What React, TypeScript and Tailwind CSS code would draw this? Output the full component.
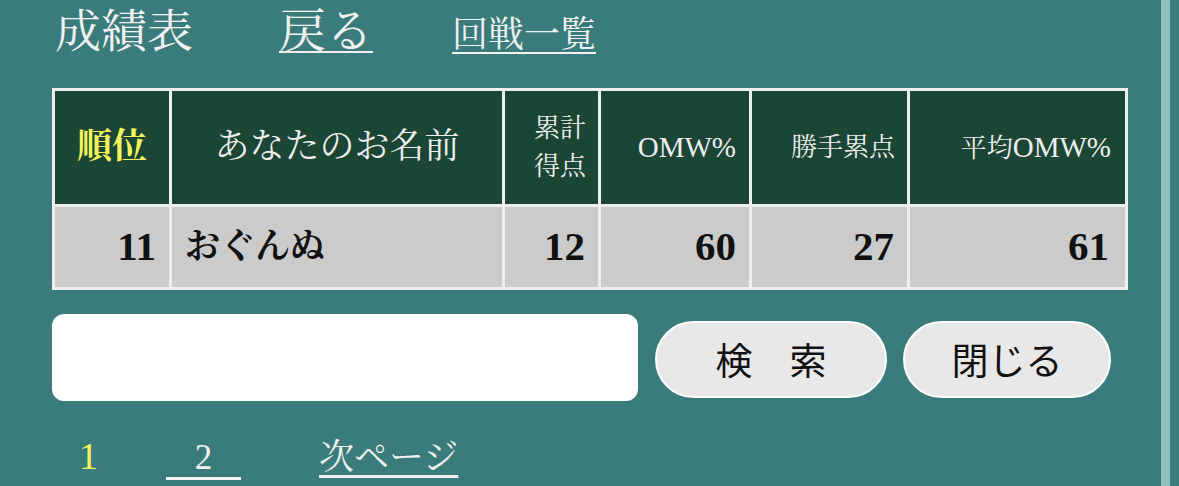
import React from "react";

const serif = "font-['Liberation_Serif','Noto_Serif_CJK_JP','Noto_Sans_CJK_JP',serif]";

export default function App() {
  return (
    <div className="flex h-[486px] w-[1179px] overflow-hidden bg-[#3a7c7b]">
      <div className={`w-[1161px] shrink-0 pl-[52px] ${serif}`}>
        {/* title row */}
        <div className="flex h-[88px] items-baseline pt-[5px] text-[#f1f1f1]">
          <span className="ml-[3px] text-[46px] leading-[52px]">成績表</span>
          <a className="ml-[86px] text-[47px] leading-[52px] underline decoration-[2px] underline-offset-[4px]">戻る</a>
          <a className="ml-[79px] text-[36px] leading-[52px] underline decoration-[2px] underline-offset-[5px]">回戦一覧</a>
        </div>

        {/* results table */}
        <table className="w-[1076px] table-fixed border-separate border-spacing-[3px] bg-[#efefef]">
          <colgroup>
            <col className="w-[114px]" />
            <col className="w-[330px]" />
            <col className="w-[93px]" />
            <col className="w-[148px]" />
            <col className="w-[155px]" />
            <col className="w-[215px]" />
          </colgroup>
          <thead>
            <tr className="h-[113px] bg-[#1b4535] text-[#eeeeee]">
              <th className="text-center align-middle text-[35px] font-bold text-[#f3f35c]">順位</th>
              <th className="text-center align-middle text-[35px] font-normal">あなたのお名前</th>
              <th className="pr-[12px] text-right align-middle text-[26px] font-normal leading-[38px]">
                累計
                <br />
                得点
              </th>
              <th className="pr-[13px] text-right align-middle text-[29px] font-normal">OMW%</th>
              <th className="pr-[12px] text-right align-middle text-[26px] font-normal">勝手累点</th>
              <th className="pr-[14px] text-right align-middle font-normal">
                <span className="text-[26px]">平均</span>
                <span className="text-[29px]">OMW%</span>
              </th>
            </tr>
          </thead>
          <tbody>
            <tr className="h-[80px] bg-[#cbcbcb] font-bold text-[#111111]">
              <td className="pr-[13px] text-right align-middle text-[41px]">11</td>
              <td className="pl-[13px] text-left align-middle text-[35px]">おぐんぬ</td>
              <td className="pr-[13px] text-right align-middle text-[41px]">12</td>
              <td className="pr-[13px] text-right align-middle text-[41px]">60</td>
              <td className="pr-[13px] text-right align-middle text-[41px]">27</td>
              <td className="pr-[16px] text-right align-middle text-[41px]">61</td>
            </tr>
          </tbody>
        </table>

        {/* search row */}
        <div className="mt-[24px] flex items-center font-['Noto_Sans_CJK_JP',sans-serif]">
          <input className="h-[87px] w-[586px] rounded-[12px] bg-white outline-none" />
          <button className="ml-[17px] mt-[4px] h-[77px] w-[232px] rounded-full border-2 border-white bg-[#e8e8e8] text-[37px] leading-none text-[#111111]">
            検　索
          </button>
          <button className="ml-[16px] mt-[4px] h-[77px] w-[208px] rounded-full border-2 border-white bg-[#e8e8e8] text-[37px] leading-none text-[#111111]">
            閉じる
          </button>
        </div>

        {/* pagination */}
        <div className="mt-[34px] flex items-baseline text-[35px] leading-[42px] text-[#f1f1f1]">
          <span className="ml-[27px] text-[38px] text-[#f3f35c]">1</span>
          <a className="ml-[68px] inline-block w-[75px] border-b-[3px] border-[#f1f1f1] text-center leading-[38px]">2</a>
          <a className="ml-[78px] underline decoration-[3px] underline-offset-[6px]">次ページ</a>
        </div>
      </div>
      <div className="h-full w-[9px] shrink-0 bg-[#8fbfbf]" />
    </div>
  );
}
